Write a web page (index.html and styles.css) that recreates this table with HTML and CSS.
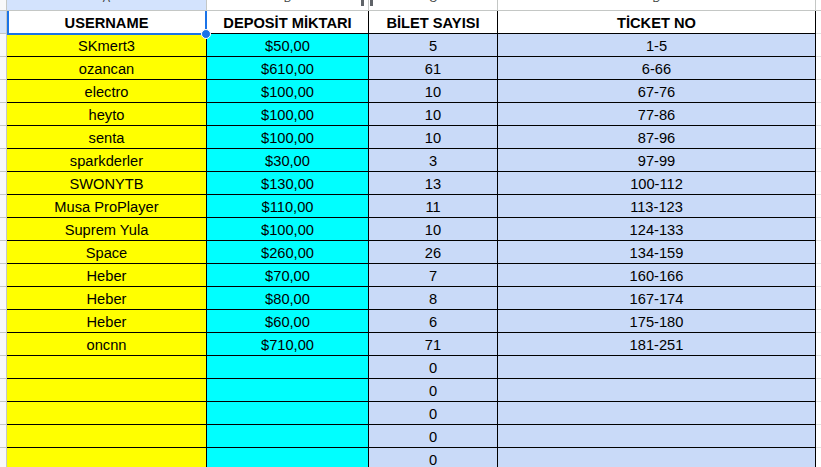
FILE: index.html
```html
<!DOCTYPE html>
<html lang="tr">
<head>
<meta charset="utf-8">
<title>Sheet</title>
<link rel="stylesheet" href="styles.css">
</head>
<body>
<div class="sheet">
  <div class="corner"></div>
  <div class="colhead sel"><span>A</span></div>
  <div class="colhead"><span>B</span></div>
  <div class="colhead"><span>C</span></div>
  <div class="colhead"><span>D</span></div>
  <div class="colhead fill"></div>

  <div class="rowhead sel"></div>
  <div class="c hd">USERNAME</div>
  <div class="c hd">DEPOSİT MİKTARI</div>
  <div class="c hd">BİLET SAYISI</div>
  <div class="c hd">TİCKET NO</div>
  <div class="fillc"></div>

  <div class="rowhead"></div><div class="c y">SKmert3</div><div class="c cy">$50,00</div><div class="c bl">5</div><div class="c bl">1-5</div><div class="fillc"></div>
  <div class="rowhead"></div><div class="c y">ozancan</div><div class="c cy">$610,00</div><div class="c bl">61</div><div class="c bl">6-66</div><div class="fillc"></div>
  <div class="rowhead"></div><div class="c y">electro</div><div class="c cy">$100,00</div><div class="c bl">10</div><div class="c bl">67-76</div><div class="fillc"></div>
  <div class="rowhead"></div><div class="c y">heyto</div><div class="c cy">$100,00</div><div class="c bl">10</div><div class="c bl">77-86</div><div class="fillc"></div>
  <div class="rowhead"></div><div class="c y">senta</div><div class="c cy">$100,00</div><div class="c bl">10</div><div class="c bl">87-96</div><div class="fillc"></div>
  <div class="rowhead"></div><div class="c y">sparkderler</div><div class="c cy">$30,00</div><div class="c bl">3</div><div class="c bl">97-99</div><div class="fillc"></div>
  <div class="rowhead"></div><div class="c y">SWONYTB</div><div class="c cy">$130,00</div><div class="c bl">13</div><div class="c bl">100-112</div><div class="fillc"></div>
  <div class="rowhead"></div><div class="c y">Musa ProPlayer</div><div class="c cy">$110,00</div><div class="c bl">11</div><div class="c bl">113-123</div><div class="fillc"></div>
  <div class="rowhead"></div><div class="c y">Suprem Yula</div><div class="c cy">$100,00</div><div class="c bl">10</div><div class="c bl">124-133</div><div class="fillc"></div>
  <div class="rowhead"></div><div class="c y">Space</div><div class="c cy">$260,00</div><div class="c bl">26</div><div class="c bl">134-159</div><div class="fillc"></div>
  <div class="rowhead"></div><div class="c y">Heber</div><div class="c cy">$70,00</div><div class="c bl">7</div><div class="c bl">160-166</div><div class="fillc"></div>
  <div class="rowhead"></div><div class="c y">Heber</div><div class="c cy">$80,00</div><div class="c bl">8</div><div class="c bl">167-174</div><div class="fillc"></div>
  <div class="rowhead"></div><div class="c y">Heber</div><div class="c cy">$60,00</div><div class="c bl">6</div><div class="c bl">175-180</div><div class="fillc"></div>
  <div class="rowhead"></div><div class="c y">oncnn</div><div class="c cy">$710,00</div><div class="c bl">71</div><div class="c bl">181-251</div><div class="fillc"></div>
  <div class="rowhead"></div><div class="c y"></div><div class="c cy"></div><div class="c bl">0</div><div class="c bl"></div><div class="fillc"></div>
  <div class="rowhead"></div><div class="c y"></div><div class="c cy"></div><div class="c bl">0</div><div class="c bl"></div><div class="fillc"></div>
  <div class="rowhead"></div><div class="c y"></div><div class="c cy"></div><div class="c bl">0</div><div class="c bl"></div><div class="fillc"></div>
  <div class="rowhead"></div><div class="c y"></div><div class="c cy"></div><div class="c bl">0</div><div class="c bl"></div><div class="fillc"></div>
  <div class="rowhead"></div><div class="c y"></div><div class="c cy"></div><div class="c bl">0</div><div class="c bl"></div><div class="fillc"></div>

  <div class="selection"><div class="handle"></div></div>
  <div class="resize r1"></div>
  <div class="resize r2"></div>
</div>
</body>
</html>
```
FILE: styles.css
```css
* { box-sizing: border-box; }
html, body {
  margin: 0;
  padding: 0;
  background: #fff;
  overflow: hidden;
  height: 467px;
}
.sheet {
  position: relative;
  display: grid;
  grid-template-columns: 7px 200px 162px 129px 318px 1fr;
  grid-template-rows: 11px;
  grid-auto-rows: 23px;
  font-family: "Liberation Sans", Arial, sans-serif;
  font-size: 14.67px;
  color: #000;
}
.corner {
  background: #f8f9fa;
  border-right: 1px solid #c4c7c5;
  border-bottom: 1px solid #c4c7c5;
}
.colhead {
  background: #fff;
  border-right: 1px solid #c4c7c5;
  border-bottom: 1px solid #c4c7c5;
  overflow: hidden;
  text-align: center;
  font-size: 11px;
  color: #444746;
  position: relative;
  z-index: 2;
}
.colhead span {
  display: block;
  line-height: 11px;
  margin-top: -7px;
}
.colhead.sel { background: #d3e3fd; }
.colhead.fill { border-right: none; }
.rowhead {
  background: #f8f9fa;
  border-right: 1px solid #c4c7c5;
  border-bottom: 1px solid #c4c7c5;
}
.rowhead.sel { background: #d3e3fd; }
.c {
  border-right: 1px solid #000;
  border-bottom: 1px solid #000;
  display: flex;
  align-items: center;
  justify-content: center;
  white-space: nowrap;
  overflow: hidden;
  padding-top: 1px;
}
.hd { font-weight: bold; background: #fff; }
.y { background: #ffff00; }
.cy { background: #00ffff; }
.bl { background: #c9daf8; }
.fillc {
  border-bottom: 1px solid #e1e1e1;
}
.selection {
  position: absolute;
  left: 7px;
  top: 11px;
  width: 200px;
  height: 24px;
  border: 2px solid #1a73e8;
  border-top: none;
  z-index: 3;
}
.handle {
  position: absolute;
  right: -6px;
  bottom: -6px;
  width: 10px;
  height: 10px;
  border-radius: 50%;
  background: #1a73e8;
  border: 1px solid #fff;
}
.resize {
  position: absolute;
  top: 0;
  width: 3px;
  height: 6px;
  background: #5f6368;
  z-index: 4;
}
.r1 { left: 361px; }
.r2 { left: 370px; }
```
